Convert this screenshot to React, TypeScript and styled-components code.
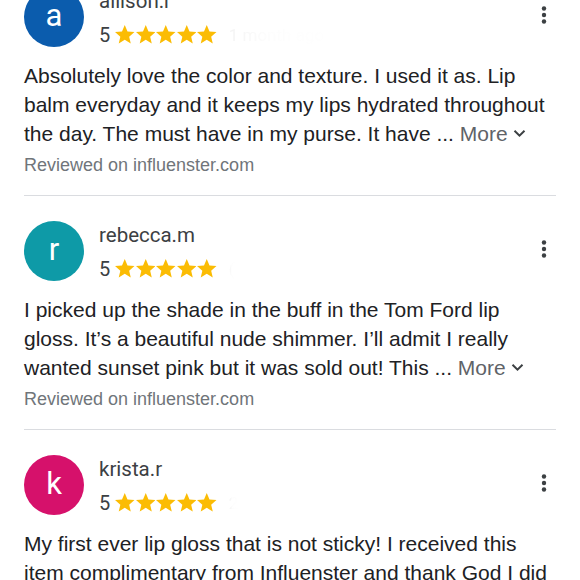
import React from "react";
import styled, { createGlobalStyle } from "styled-components";

const Global = createGlobalStyle`
  html, body { margin: 0; padding: 0; background: #fff; }
  body { width: 580px; height: 580px; overflow: hidden; }
`;

const List = styled.div`
  margin-top: -38px;
  display: flex;
  flex-direction: column;
`;

const Card = styled.div`
  margin: 0 24px;
  padding: 25px 0 19px 0;
  border-bottom: 1px solid #dadce0;
`;

const Header = styled.div`
  display: flex;
  align-items: flex-start;
`;

const Avatar = styled.div<{ $bg: string }>`
  width: 60px;
  height: 60px;
  border-radius: 50%;
  background: ${(p) => p.$bg};
  color: #fff;
  display: flex;
  align-items: center;
  justify-content: center;
  font-family: Roboto, "Liberation Sans", sans-serif;
  font-size: 31px;
  line-height: 1;
  padding-bottom: 4px;
  box-sizing: border-box;
  flex-shrink: 0;
`;

const Meta = styled.div`
  flex: 1;
  display: flex;
  flex-direction: column;
  gap: 11px;
  padding-top: 2px;
  margin-left: 15px;
`;

const Name = styled.div`
  font-family: Roboto, "Liberation Sans", sans-serif;
  font-size: 20.5px;
  line-height: 24px;
  color: #3c4043;
`;

const RatingRow = styled.div`
  display: flex;
  align-items: center;
  height: 22px;
  font-family: Roboto, "Liberation Sans", sans-serif;
  font-size: 20px;
  color: #3c4043;
`;

const Stars = styled.div`
  display: flex;
  gap: 1px;
  margin-left: 5px;
  margin-top: -1px;
`;

const Faded = styled.span`
  margin-left: 12px;
  color: #f2f2f2;
  font-size: 17px;
  -webkit-mask-image: linear-gradient(90deg, rgba(0,0,0,0.9) 0%, rgba(0,0,0,0.15) 40%, rgba(0,0,0,0.05) 100%);
`;

const Menu = styled.svg`
  width: 24px;
  height: 24px;
  margin-top: 16px;
  flex-shrink: 0;
`;

const Body = styled.div`
  margin-top: 14px;
  font-family: "Liberation Sans", Arial, sans-serif;
  font-size: 21px;
  line-height: 29px;
  color: #202124;
`;

const Line = styled.div`
  white-space: nowrap;
`;

const More = styled.span`
  color: #5f6368;
  display: inline-flex;
  align-items: center;
  gap: 5px;
`;

const Source = styled.div`
  margin-top: 6px;
  font-family: "Liberation Sans", Arial, sans-serif;
  font-size: 18px;
  line-height: 22px;
  color: #70757a;
`;

const Star = () => (
  <svg width="19.5" height="18.5" viewBox="2 2 20 19">
    <path
      fill="#fbbc04"
      d="M12 17.27L18.18 21l-1.64-7.03L22 9.24l-7.19-.61L12 2 9.19 8.63 2 9.24l5.46 4.73L5.82 21z"
    />
  </svg>
);

const Chevron = () => (
  <svg width="13" height="9" viewBox="0 0 13 9">
    <path d="M1.5 1.8 L6.5 6.6 L11.5 1.8" fill="none" stroke="#3c4043" strokeWidth="2" />
  </svg>
);

type Review = {
  letter: string;
  color: string;
  name: string;
  date: string;
  lines: string[];
  more: boolean;
};

const reviews: Review[] = [
  {
    letter: "a",
    color: "#0b5cad",
    name: "allison.r",
    date: "1 month ago",
    lines: [
      "Absolutely love the color and texture. I used it as. Lip",
      "balm everyday and it keeps my lips hydrated throughout",
      "the day. The must have in my purse. It have ...",
    ],
    more: true,
  },
  {
    letter: "r",
    color: "#0e9aa7",
    name: "rebecca.m",
    date: "(",
    lines: [
      "I picked up the shade in the buff in the Tom Ford lip",
      "gloss. It\u2019s a beautiful nude shimmer. I\u2019ll admit I really",
      "wanted sunset pink but it was sold out! This ...",
    ],
    more: true,
  },
  {
    letter: "k",
    color: "#d6116b",
    name: "krista.r",
    date: "2",
    lines: [
      "My first ever lip gloss that is not sticky! I received this",
      "item complimentary from Influenster and thank God I did",
    ],
    more: false,
  },
];

export default function App() {
  return (
    <>
      <Global />
      <List>
        {reviews.map((r) => (
          <Card key={r.name}>
            <Header>
              <Avatar $bg={r.color}>{r.letter}</Avatar>
              <Meta>
                <Name>{r.name}</Name>
                <RatingRow>
                  5
                  <Stars>
                    {[0, 1, 2, 3, 4].map((i) => (
                      <Star key={i} />
                    ))}
                  </Stars>
                  <Faded>{r.date}</Faded>
                </RatingRow>
              </Meta>
              <Menu viewBox="0 0 24 24">
                <circle cx="12" cy="5.5" r="2.2" fill="#3c4043" />
                <circle cx="12" cy="12" r="2.2" fill="#3c4043" />
                <circle cx="12" cy="18.5" r="2.2" fill="#3c4043" />
              </Menu>
            </Header>
            <Body>
              {r.lines.map((l, i) => (
                <Line key={i}>
                  {l}
                  {r.more && i === r.lines.length - 1 && (
                    <>
                      {" "}
                      <More>
                        More <Chevron />
                      </More>
                    </>
                  )}
                </Line>
              ))}
            </Body>
            {r.more && <Source>Reviewed on influenster.com</Source>}
          </Card>
        ))}
      </List>
    </>
  );
}
